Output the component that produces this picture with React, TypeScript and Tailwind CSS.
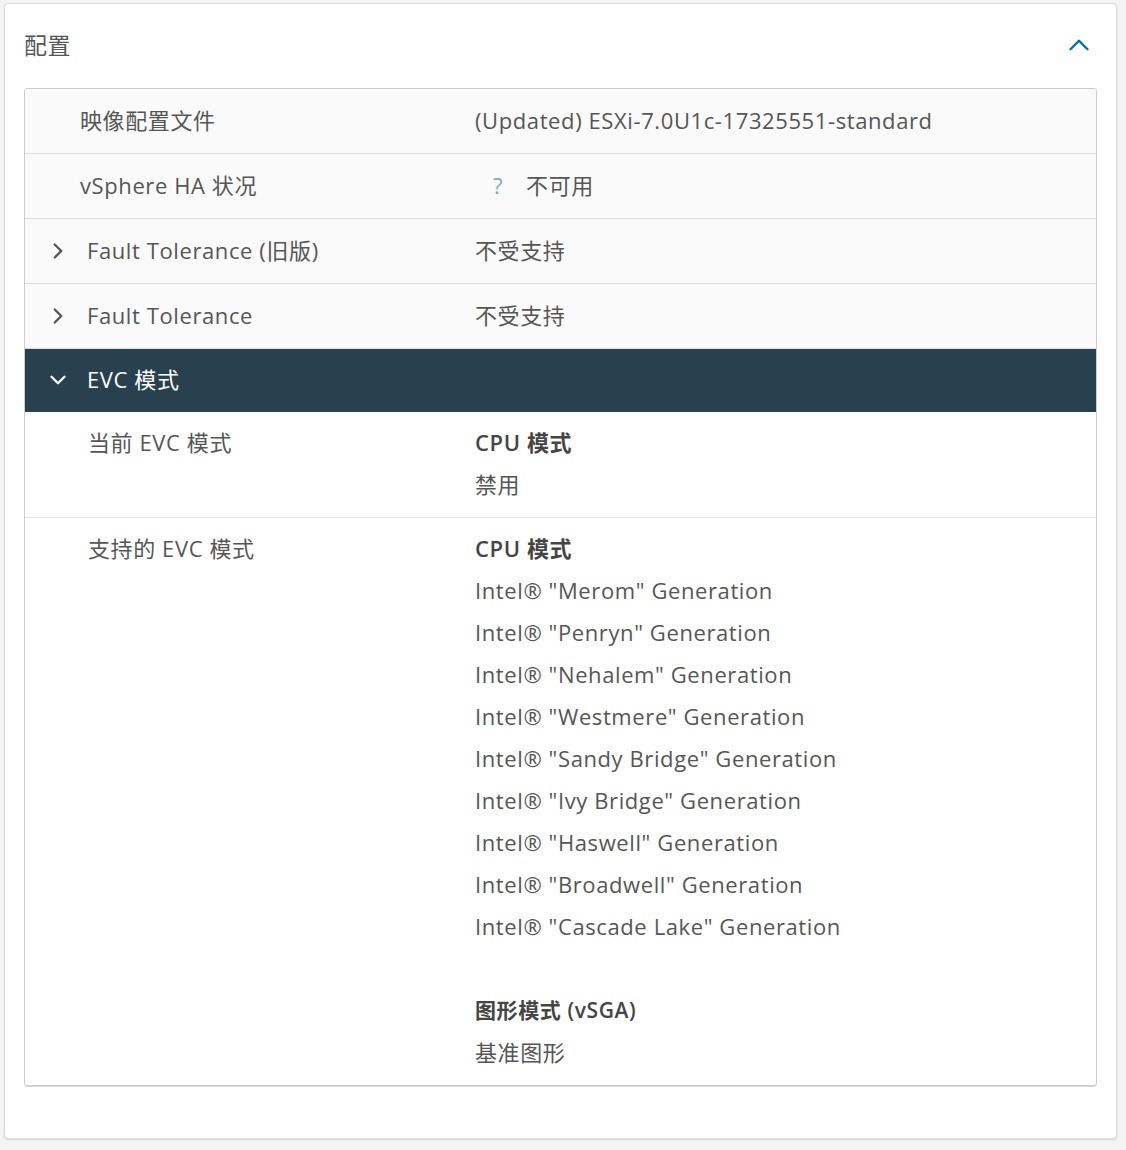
import React from 'react';
import { ChevronRight, ChevronDown, ChevronUp } from 'lucide-react';

const font = { fontFamily: '"Open Sans", "Noto Sans CJK SC", sans-serif' };

const cpuModes = [
    'Intel® "Merom" Generation',
    'Intel® "Penryn" Generation',
    'Intel® "Nehalem" Generation',
    'Intel® "Westmere" Generation',
    'Intel® "Sandy Bridge" Generation',
    'Intel® "Ivy Bridge" Generation',
    'Intel® "Haswell" Generation',
    'Intel® "Broadwell" Generation',
    'Intel® "Cascade Lake" Generation',
];

const Row: React.FC<{ label: string; expand?: boolean; children: React.ReactNode }> = ({ label, expand, children }) => (
    <div className="grid grid-cols-[451px_1fr] h-[65px] items-center bg-[#fafafa] border-b border-[#dddddd] pb-[2px]">
        <div className="flex items-center">
            {expand ? (
                <>
                    <ChevronRight size={26} strokeWidth={2.2} className="ml-[20px] mt-[2px] text-[#565656]" />
                    <span className="ml-[16px]">{label}</span>
                </>
            ) : (
                <span className="pl-[55px]">{label}</span>
            )}
        </div>
        <div className="-ml-[1px]">{children}</div>
    </div>
);

export default function App() {
    return (
        <div className="min-h-screen bg-[#f4f4f4] pt-[3px] pl-[4px]" style={font}>
            <div className="w-[1113px] h-[1136px] bg-white border border-[#dddddd] rounded-[4px] shadow-[0_1px_2px_rgba(0,0,0,0.12)] px-[19px]">
                {/* header */}
                <div className="h-[84px] flex items-center justify-between">
                    <h2 className="text-[23px] text-[#565656] font-normal tracking-[0.5px] -mt-[1px]">配置</h2>
                    <ChevronUp size={34} strokeWidth={1.7} className="text-[#0072a3] mr-[1px] -mt-[3px]" />
                </div>

                {/* properties table */}
                <div className="border border-[#cccccc] rounded-[3px] overflow-hidden text-[22px] tracking-[0.6px] text-[#565656] shadow-[0_1px_0_#d7d7d7]">
                    <Row label="映像配置文件">(Updated) ESXi-7.0U1c-17325551-standard</Row>
                    <Row label="vSphere HA 状况">
                        <span className="ml-[18px] text-[#7fa7bd]">?</span>
                        <span className="ml-[23px]">不可用</span>
                    </Row>
                    <Row label="Fault Tolerance (旧版)" expand>不受支持</Row>
                    <Row label="Fault Tolerance" expand>不受支持</Row>

                    {/* EVC section */}
                    <div className="h-[63px] flex items-center bg-[#29414e] text-white pb-[3px]">
                        <ChevronDown size={26} strokeWidth={2.2} className="ml-[20px] mt-[2px]" />
                        <span className="ml-[16px]">EVC 模式</span>
                    </div>

                    <div className="grid grid-cols-[451px_1fr] pt-[9px] pb-[12px] border-b border-[#e5e5e5] leading-[42px]">
                        <div className="pl-[63px]">当前 EVC 模式</div>
                        <div className="-ml-[1px]">
                            <div className="font-semibold text-[#454545]">CPU 模式</div>
                            <div>禁用</div>
                        </div>
                    </div>

                    <div className="grid grid-cols-[451px_1fr] pt-[9px] pb-[12px] leading-[42px]">
                        <div className="pl-[63px]">支持的 EVC 模式</div>
                        <div className="-ml-[1px]">
                            <div className="font-semibold text-[#454545]">CPU 模式</div>
                            {cpuModes.map((m) => (
                                <div key={m}>{m}</div>
                            ))}
                            <div className="h-[42px]" />
                            <div className="font-semibold text-[#454545] text-[21px]">图形模式 (vSGA)</div>
                            <div>基准图形</div>
                        </div>
                    </div>
                </div>
            </div>
        </div>
    );
}
